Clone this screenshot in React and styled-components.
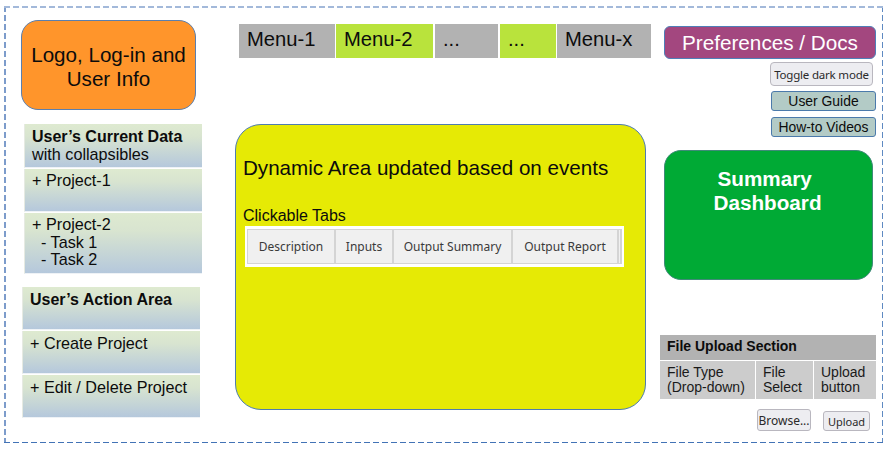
import React from 'react';
import styled, { createGlobalStyle } from 'styled-components';

const GlobalStyle = createGlobalStyle`
  html, body {
    margin: 0;
    padding: 0;
    background: #fff;
    font-family: "Liberation Sans", Arial, sans-serif;
    color: #0c0c0c;
  }
`;

const Page = styled.div`
  width: 888px;
  height: 449px;
  padding: 6px 0 0 4px;
  box-sizing: border-box;
  overflow: hidden;
`;

// dashes are longer than a css dashed border gives, so they are painted
const Frame = styled.div`
  width: 879px;
  height: 437px;
  box-sizing: border-box;
  display: flex;
  align-items: flex-start;
  padding: 14px 0 0 17px;
  background-repeat: repeat-x, repeat-x, repeat-y, repeat-y;
  background-position: 0 0, 0 100%, 0 0, 100% 0;
  background-size: 9px 2px, 9px 1.5px, 1.5px 9px, 1.5px 9px;
  background-image:
    linear-gradient(to right, #a3b9da 6px, transparent 6px),
    linear-gradient(to right, #4273b6 6px, transparent 6px),
    linear-gradient(to bottom, #7d9ccb 6px, transparent 6px),
    linear-gradient(to bottom, #5f8ac2 6px, transparent 6px);
`;

const LeftColumn = styled.div`
  width: 182px;
  flex: none;
  display: flex;
  flex-direction: column;
`;

const MiddleColumn = styled.div`
  width: 416px;
  margin-left: 32px;
  flex: none;
  display: flex;
  flex-direction: column;
`;

const RightColumn = styled.div`
  width: 217px;
  margin-left: 9px;
  flex: none;
  display: flex;
  flex-direction: column;
`;

const LogoBox = styled.div`
  width: 175px;
  height: 90px;
  box-sizing: border-box;
  padding-top: 3px;
  background: #ff952b;
  border: 1px solid #5b7fae;
  border-radius: 17px;
  display: flex;
  align-items: center;
  justify-content: center;
  text-align: center;
  font-size: 20.6px;
  line-height: 24px;
`;

const GradientTable = styled.div`
  width: 178px;
  margin-top: ${({ $top }) => $top}px;
  margin-left: ${({ $left }) => $left}px;
  display: flex;
  flex-direction: column;
  gap: 1px;
`;

const GradientRow = styled.div`
  height: ${({ $height }) => $height}px;
  box-sizing: border-box;
  padding: ${({ $padTop }) => $padTop ?? 3}px 0 0 7px;
  background: linear-gradient(#deead0 0%, #d8e4d0 30%, #b5c8dc 100%);
  font-size: 16.2px;
  line-height: 17.5px;
  white-space: pre;
  border-left: 1px solid #e6eae2;
  border-bottom: 1px solid #eef2f6;
`;

const RowTitle = styled.div`
  font-size: 16px;
  line-height: 18px;
  font-weight: 700;
`;

const MenuBar = styled.div`
  margin: 4px 0 0 4px;
  width: 412px;
  height: 34px;
  display: flex;
`;

const MenuItem = styled.div`
  width: ${({ $width }) => $width}px;
  margin-left: ${({ $left }) => $left}px;
  flex: none;
  box-sizing: border-box;
  padding: 3px 0 0 8px;
  background: ${({ $on }) => ($on ? '#b9e33c' : '#b2b2b2')};
  font-size: 20.2px;
  line-height: 24px;
`;

const DynamicPanel = styled.div`
  width: 411px;
  height: 286px;
  margin-top: 66px;
  box-sizing: border-box;
  background: #e6ea05;
  border: 1px solid #4f7daf;
  border-radius: 26px;
  padding: 30px 0 0 7px;
`;

const PanelTitle = styled.div`
  font-size: 20.6px;
  line-height: 25px;
`;

const TabsLabel = styled.div`
  margin-top: 27px;
  font-size: 16px;
  line-height: 18px;
`;

const TabStrip = styled.div`
  width: 379px;
  height: 41px;
  margin: 1px 0 0 2px;
  box-sizing: border-box;
  background: #fff;
  padding: 3px 0 3px 2px;
  display: flex;
`;

const Tab = styled.div`
  width: ${({ $width }) => $width}px;
  flex: none;
  box-sizing: border-box;
  background: #f0f0f0;
  border: 1px solid #d4d4d4;
  border-left-width: ${({ $first }) => ($first ? 1 : 0)}px;
  border-right-width: 2px;
  display: flex;
  align-items: center;
  justify-content: center;
  font-family: "Noto Sans", "Open Sans", sans-serif;
  font-size: 12px;
  color: #3a3a3a;
`;

const PrefsButton = styled.div`
  width: 212px;
  height: 33px;
  margin: 6px 0 0 4px;
  box-sizing: border-box;
  background: #a3477f;
  border: 1px solid #4f7fb8;
  border-radius: 6px;
  color: #fff;
  display: flex;
  align-items: center;
  justify-content: center;
  font-size: 20.7px;
`;

const DarkToggle = styled.div`
  width: 103px;
  height: 24px;
  margin: 3px 0 0 110px;
  box-sizing: border-box;
  background: #ededf1;
  border: 1px solid #b9b7bf;
  border-radius: 4px;
  display: flex;
  align-items: center;
  justify-content: center;
  font-family: "Noto Sans", "Open Sans", sans-serif;
  font-size: 11.5px;
  letter-spacing: -0.2px;
  color: #2a2a2a;
`;

const DocLink = styled.div`
  width: 105px;
  height: 20px;
  margin: ${({ $top }) => $top}px 0 0 111px;
  box-sizing: border-box;
  background: #b3cbc6;
  border: 1px solid #4b7aab;
  border-radius: 3px;
  display: flex;
  align-items: center;
  justify-content: center;
  font-size: 13.9px;
`;

const SummaryCard = styled.div`
  width: 209px;
  height: 130px;
  margin: 13px 0 0 4px;
  box-sizing: border-box;
  background: #00aa35;
  border: 1px solid #3f8a78;
  border-radius: 17px;
  padding: 16px 2px 0 0;
  color: #fff;
  text-align: center;
  font-size: 20.7px;
  line-height: 24px;
  font-weight: 700;
`;

const UploadTable = styled.div`
  width: 216px;
  margin-top: 55px;
  display: grid;
  grid-template-columns: 95px 57px 62px;
  column-gap: 1px;
  row-gap: 1px;
`;

const UploadHeader = styled.div`
  grid-column: 1 / -1;
  height: 25px;
  box-sizing: border-box;
  padding: 3px 0 0 7px;
  background: #b2b2b2;
  font-size: 14px;
  line-height: 17px;
  font-weight: 700;
`;

const UploadCell = styled.div`
  height: 38px;
  box-sizing: border-box;
  padding: 4px 0 0 7px;
  background: #cccccc;
  color: #1a1a1a;
  font-size: 14px;
  line-height: 15px;
`;

const UploadActions = styled.div`
  margin-top: 10px;
  display: flex;
  align-items: flex-end;
`;

const NativeButton = styled.div`
  height: ${({ $height }) => $height}px;
  width: ${({ $width }) => $width}px;
  margin-left: ${({ $left }) => $left}px;
  flex: none;
  box-sizing: border-box;
  background: #ededf1;
  border: 1px solid #b9b7bf;
  border-radius: 3px;
  display: flex;
  align-items: center;
  justify-content: center;
  font-family: "Noto Sans", "Open Sans", sans-serif;
  font-size: ${({ $size }) => $size}px;
  color: #2a2a2a;
`;

const menuItems = [
  { label: 'Menu-1', width: 96, left: 0 },
  { label: 'Menu-2', width: 97, left: 1, on: true },
  { label: '...', width: 63, left: 2 },
  { label: '...', width: 56, left: 2, on: true },
  { label: 'Menu-x', width: 94, left: 1 },
];

const tabs = [
  { label: 'Description', width: 89 },
  { label: 'Inputs', width: 58 },
  { label: 'Output Summary', width: 119 },
  { label: 'Output Report', width: 106 },
  { label: '', width: 3 },
];

export default function App() {
  return (
    <Page>
      <GlobalStyle />
      <Frame>
        <LeftColumn>
          <LogoBox>
            Logo, Log-in and
            <br />
            User Info
          </LogoBox>

          <GradientTable $top={14} $left={3}>
            <GradientRow $height={44} $padTop={4}>
              <RowTitle>User’s Current Data</RowTitle>
              with collapsibles
            </GradientRow>
            <GradientRow $height={43}>+ Project-1</GradientRow>
            <GradientRow $height={61}>
              {'+ Project-2\n  - Task 1\n  - Task 2'}
            </GradientRow>
          </GradientTable>

          <GradientTable $top={13} $left={1}>
            <GradientRow $height={43} $padTop={4}>
              <RowTitle>User’s Action Area</RowTitle>
            </GradientRow>
            <GradientRow $height={43} $padTop={4}>+ Create Project</GradientRow>
            <GradientRow $height={43} $padTop={4}>+ Edit / Delete Project</GradientRow>
          </GradientTable>
        </LeftColumn>

        <MiddleColumn>
          <MenuBar>
            {menuItems.map((item, i) => (
              <MenuItem key={i} $width={item.width} $left={item.left} $on={item.on}>
                {item.label}
              </MenuItem>
            ))}
          </MenuBar>

          <DynamicPanel>
            <PanelTitle>Dynamic Area updated based on events</PanelTitle>
            <TabsLabel>Clickable Tabs</TabsLabel>
            <TabStrip>
              {tabs.map((tab, i) => (
                <Tab key={i} $width={tab.width} $first={i === 0}>
                  {tab.label}
                </Tab>
              ))}
            </TabStrip>
          </DynamicPanel>
        </MiddleColumn>

        <RightColumn>
          <PrefsButton>Preferences / Docs</PrefsButton>
          <DarkToggle>Toggle dark mode</DarkToggle>
          <DocLink $top={5}>User Guide</DocLink>
          <DocLink $top={6}>How-to Videos</DocLink>
          <SummaryCard>
            {'Summary\u00a0'}
            <br />
            Dashboard
          </SummaryCard>

          <UploadTable>
            <UploadHeader>File Upload Section</UploadHeader>
            <UploadCell>
              File Type
              <br />
              (Drop-down)
            </UploadCell>
            <UploadCell>
              File
              <br />
              Select
            </UploadCell>
            <UploadCell>
              Upload
              <br />
              button
            </UploadCell>
          </UploadTable>

          <UploadActions>
            <NativeButton $width={54} $height={22} $left={97} $size={12}>
              Browse...
            </NativeButton>
            <NativeButton $width={47} $height={20} $left={12} $size={11}>
              Upload
            </NativeButton>
          </UploadActions>
        </RightColumn>
      </Frame>
    </Page>
  );
}
